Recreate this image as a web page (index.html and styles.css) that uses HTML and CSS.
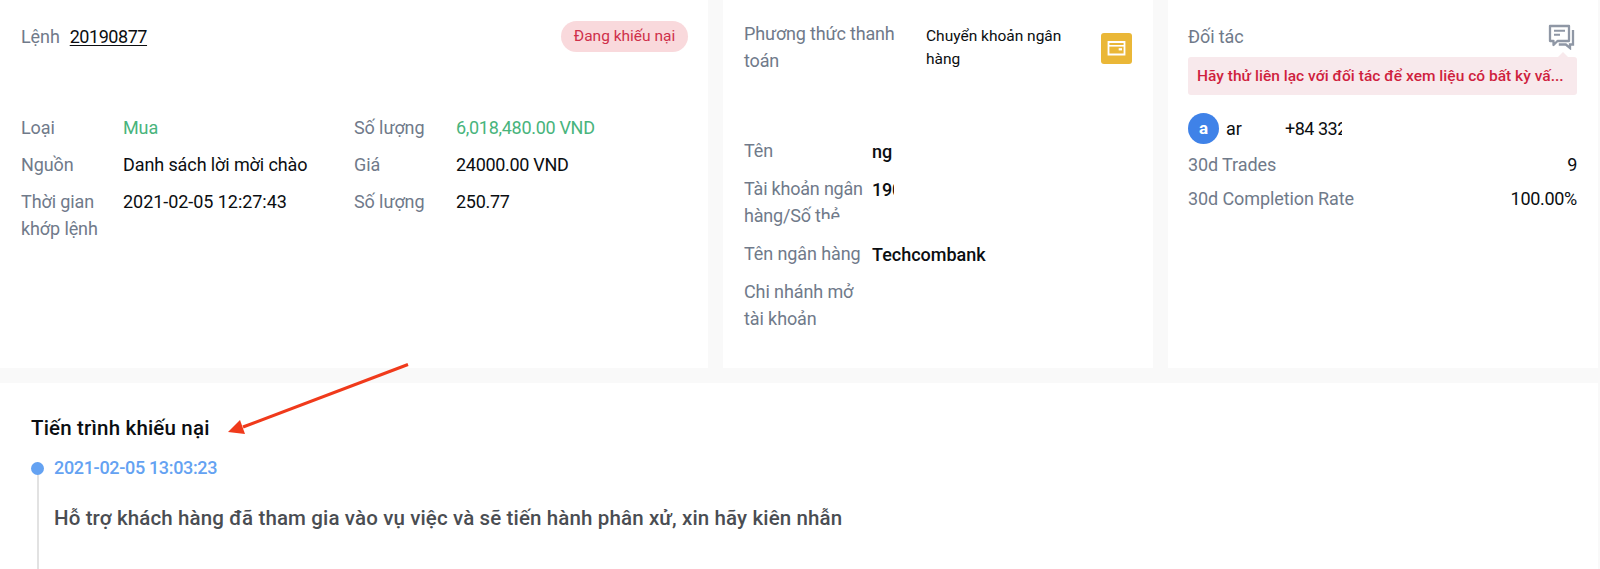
FILE: index.html
```
<!DOCTYPE html>
<html lang="vi">
<head>
<meta charset="UTF-8">
<title>Chi tiết khiếu nại</title>
<link rel="stylesheet" href="styles.css">
</head>
<body>

<div class="cards">
    <!-- Thông tin lệnh -->
    <div class="card order">
        <div class="order-head">
            <span class="label">Lệnh</span>
            <a class="order-id">20190877</a>
            <span class="status">Đang khiếu nại</span>
        </div>
        <div class="order-grid">
            <span class="label">Loại</span>
            <span class="green">Mua</span>
            <span class="label">Số lượng</span>
            <span class="green num">6,018,480.00 VND</span>

            <span class="label">Nguồn</span>
            <span>Danh sách lời mời chào</span>
            <span class="label">Giá</span>
            <span class="num">24000.00 VND</span>

            <span class="label">Thời gian khớp lệnh</span>
            <span class="date">2021-02-05 12:27:43</span>
            <span class="label">Số lượng</span>
            <span class="num">250.77</span>
        </div>
    </div>

    <!-- Thanh toán -->
    <div class="card payment">
        <div class="payment-head">
            <span class="label">Phương thức thanh toán</span>
            <span class="method">Chuyển khoản ngân hàng</span>
            <svg class="wallet" width="31" height="31" viewBox="0 0 31 31">
                <rect width="31" height="31" rx="3" fill="#eab737"/>
                <path d="M7.5 9h16v12.5h-16z" fill="none" stroke="#fff" stroke-width="1.8"/>
                <path d="M7.5 12.8h16" stroke="#fff" stroke-width="1.6"/>
                <rect x="17.7" y="15.2" width="3.3" height="2.2" fill="#fff"/>
            </svg>
        </div>
        <div class="payment-grid">
            <span class="label">Tên</span>
            <b>ng</b>
            <span class="label account">Tài khoản ngân<br>hàng/Số t<span class="half">hẻ</span></span>
            <b class="cut">190</b>
            <span class="label">Tên ngân hàng</span>
            <b>Techcombank</b>
            <span class="label">Chi nhánh mở tài khoản</span>
        </div>
    </div>

    <!-- Đối tác -->
    <div class="card partner">
        <div class="partner-head">
            <span class="label">Đối tác</span>
            <svg class="chat" width="27" height="26" viewBox="0 0 27 26" fill="none" stroke="#8f97a5" stroke-width="2.3">
                <path d="M2 2h19v15H9.5l-4 4v-4H2z" stroke-linejoin="round"/>
                <path d="M6 6.7h11M6 10.7h6" stroke-width="2"/>
                <path d="M25 6v14.5h-3v3.5l-4.2-3.5h-7"/>
            </svg>
        </div>
        <div class="notice">Hãy thử liên lạc với đối tác để xem liệu có bất kỳ vấ...</div>
        <div class="user">
            <span class="avatar">a</span>
            <span class="user-name">ar</span>
            <span class="phone">+84 332</span>
        </div>
        <div class="stat"><span class="label">30d Trades</span><span class="num">9</span></div>
        <div class="stat"><span class="label">30d Completion Rate</span><span class="num">100.00%</span></div>
    </div>
</div>

<!-- Tiến trình -->
<div class="progress">
    <h2>Tiến trình khiếu nại</h2>
    <div class="step">
        <div class="rail"></div>
        <div class="step-body">
            <div class="time">2021-02-05 13:03:23</div>
            <p>Hỗ trợ khách hàng đã tham gia vào vụ việc và sẽ tiến hành phân xử, xin hãy kiên nhẫn</p>
        </div>
    </div>
</div>

<svg class="arrow" width="190" height="80" viewBox="0 0 190 80">
    <path d="M185 4.5L20 67" stroke="#f03a1b" stroke-width="3"/>
    <path d="M5 72L17 60L22 74z" fill="#f03a1b"/>
</svg>

</body>
</html>
```
FILE: styles.css
```
* {
box-sizing: border-box;
}

body {
margin: 0;
height: 569px;
overflow: hidden;
background: #f9f9f9;
color: #0b0e11;
font-family: Roboto, "Noto Sans", sans-serif;
font-size: 18px;
line-height: 27px;
letter-spacing: -0.1px;
}

.cards {
display: grid;
grid-template-columns: 708px 430px 430px;
gap: 15px;
height: 368px;
}

.card {
background: #fff;
}

.label {
color: #707a8a;
}

.green {
color: #48b47c;
}

.num {
letter-spacing: -0.3px;
}

.date {
letter-spacing: -0.05px;
}

b {
font-weight: 500;
letter-spacing: 0;
}

/* order */
.order {
padding: 21px 20px 0 21px;
}

.order-head {
display: flex;
align-items: center;
height: 31px;
}

.order-id {
margin-left: 10px;
letter-spacing: -0.45px;
text-decoration: underline;
text-underline-offset: 2px;
text-decoration-thickness: 1px;
}

.status {
margin-left: auto;
height: 31px;
width: 127px;
border-radius: 16px;
background: #f9d9dc;
color: #cf304a;
font-size: 15.5px;
letter-spacing: 0;
line-height: 30px;
text-align: center;
}

.order-grid {
display: grid;
grid-template-columns: 80px 209px 80px 1fr;
column-gap: 22px;
row-gap: 10px;
margin-top: 62px;
}

/* payment */
.payment {
padding: 20px 21px 0;
}

.payment-head {
display: flex;
height: 117px;
}

.payment-head .label {
width: 160px;
letter-spacing: -0.17px;
}

.method {
width: 150px;
margin: 5px 0 0 22px;
font-size: 15.5px;
letter-spacing: 0;
line-height: 23px;
}

.wallet {
margin: 13px 0 0 auto;
}

.payment-grid {
display: grid;
grid-template-columns: 120px 1fr;
column-gap: 8px;
row-gap: 11px;
}

.payment-grid b {
position: relative;
top: 1px;
height: 27px;
}

.account {
white-space: nowrap;
letter-spacing: -0.2px;
}

.payment-grid .cut {
width: 22px;
overflow: hidden;
letter-spacing: -0.2px;
}

/* lower part of the word is masked */
.half {
display: inline-block;
height: 17px;
overflow: hidden;
vertical-align: top;
}

/* partner */
.partner {
padding: 21px 21px 0 20px;
}

.partner-head {
display: flex;
justify-content: space-between;
height: 36px;
padding-top: 2px;
}

.chat {
margin: 1px 2px 0 0;
}

.notice {
position: relative;
height: 38px;
padding-left: 9px;
border-radius: 3px;
background: #f8e9ec;
color: #cf1f3e;
font-size: 15.5px;
font-weight: 500;
letter-spacing: 0.02px;
line-height: 38px;
white-space: nowrap;
}

.notice::before {
content: "";
position: absolute;
top: -5px;
right: 9px;
border: 5px solid transparent;
border-top: 0;
border-bottom-color: #f8e9ec;
}

.user {
display: flex;
align-items: center;
height: 31px;
margin: 18px 0 7px;
}

.avatar {
width: 31px;
height: 31px;
border-radius: 50%;
background: #3f82e8;
color: #fff;
font-size: 17px;
font-weight: 700;
line-height: 30px;
text-align: center;
}

.user-name {
width: 59px;
margin-left: 7px;
}

.phone {
width: 57px;
overflow: hidden;
white-space: nowrap;
letter-spacing: -0.5px;
}

.stat {
display: flex;
justify-content: space-between;
margin-bottom: 7px;
}

/* progress */
.progress {
width: 1598px;
height: 186px;
margin-top: 15px;
padding: 32px 31px 0;
background: #fff;
}

h2 {
margin: 0 0 12px;
font-size: 20.5px;
font-weight: 500;
letter-spacing: 0.18px;
line-height: 27px;
}

.step {
display: flex;
gap: 10px;
height: 115px;
}

.rail {
width: 13px;
margin-top: 8px;
background: linear-gradient(#e2e2e2, #e2e2e2) center / 2px 100% no-repeat;
}

.rail::before {
content: "";
display: block;
height: 13px;
border-radius: 50%;
background: #64a2f2;
}

.time {
color: #64a2f2;
font-weight: 500;
letter-spacing: -0.33px;
}

.step-body p {
margin: 24px 0 0;
color: #4a4d52;
font-size: 20.5px;
font-weight: 500;
letter-spacing: 0.13px;
}

.arrow {
position: absolute;
left: 223px;
top: 360px;
}
```
